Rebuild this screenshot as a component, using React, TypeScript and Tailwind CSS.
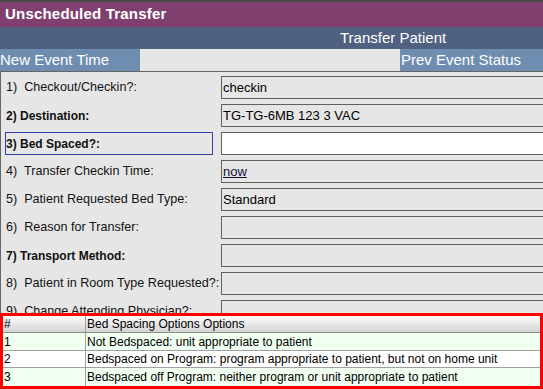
import React from "react";

type Row = {
  n: string;
  label: string;
  bold?: boolean;
  focus?: boolean;
  white?: boolean;
  value?: string;
  link?: string;
};

const rows: Row[] = [
  { n: "1)", label: "Checkout/Checkin?:", value: "checkin" },
  { n: "2)", label: "Destination:", bold: true, value: "TG-TG-6MB 123 3 VAC" },
  { n: "3)", label: "Bed Spaced?:", bold: true, focus: true, white: true },
  { n: "4)", label: "Transfer Checkin Time:", link: "now" },
  { n: "5)", label: "Patient Requested Bed Type:", value: "Standard" },
  { n: "6)", label: "Reason for Transfer:" },
  { n: "7)", label: "Transport Method:", bold: true },
  { n: "8)", label: "Patient in Room Type Requested?:" },
  { n: "9)", label: "Change Attending Physician?:" },
];

const options = [
  { n: "1", text: "Not Bedspaced: unit appropriate to patient", bg: "bg-[#f0fff0]" },
  { n: "2", text: "Bedspaced on Program: program appropriate to patient, but not on home unit", bg: "bg-white" },
  { n: "3", text: "Bedspaced off Program: neither program or unit appropriate to patient", bg: "bg-[#f0fff0]" },
];

export default function App() {
  return (
    <div
      className="relative w-[543px] h-[389px] overflow-hidden bg-[#e6e6e6]"
      style={{ fontFamily: '"Liberation Sans", Arial, sans-serif' }}
    >
      <div className="h-[2px] bg-[#4a4a4a]" />
      <div className="h-[25px] bg-[#7f4070] flex items-center pl-[5px] text-white font-bold text-[15px] tracking-[0.2px]">
        Unscheduled Transfer
      </div>
      <div className="h-[22px] bg-[#4f6081] flex items-center pl-[340px] text-white text-[15px]">
        Transfer Patient
      </div>
      <div className="h-[22px] flex text-white text-[15px]">
        <div className="w-[140px] shrink-0 bg-[#6e8db1] flex items-center">New Event Time</div>
        <div className="flex-1 bg-[#e6e6e6]" />
        <div className="w-[143px] shrink-0 bg-[#6e8db1] flex items-center pl-[1px]">Prev Event Status</div>
      </div>
      <div className="h-[1px] bg-[#666666]" />
      <div className="border-l border-[#666666] pt-[4px] h-[400px] overflow-hidden">
        {rows.map((r) => (
          <div key={r.n} className="flex items-center h-[23px] mb-[5px]">
            <div
              className={
                "ml-[4px] w-[208px] shrink-0 h-[23px] border flex items-center whitespace-pre text-[#111111] " +
                (r.focus ? "border-[#3040a8] " : "border-transparent ") +
                (r.bold ? "font-bold text-[12px]" : "text-[12.6px]")
              }
            >
              {r.bold ? `${r.n} ${r.label}` : `${r.n}  ${r.label}`}
            </div>
            <div
              className={
                "ml-[8px] w-[340px] shrink-0 h-[23px] border border-[#606060] flex items-center pl-[1px] text-[13px] text-black " +
                (r.white ? "bg-white" : "bg-[#e6e6e6]")
              }
            >
              {r.value}
              {r.link && <span className="underline text-[#10103a]">{r.link}</span>}
            </div>
          </div>
        ))}
      </div>

      <div className="absolute left-0 top-[313px] w-[543px] h-[76px] border-[3px] border-[#ff0000] bg-white text-[12px] text-black">
        <div className="flex h-[17px] border-b border-[#8c8c8c] bg-gradient-to-b from-[#fdfdfd] to-[#d4d4d4]">
          <div className="w-[83px] shrink-0 border-r border-[#a0a0a0] pl-[1px] flex items-center">#</div>
          <div className="flex-1 pl-[1px] flex items-center">Bed Spacing Options Options</div>
        </div>
        {options.map((o, i) => (
          <div
            key={o.n}
            className={
              "flex " +
              o.bg +
              (i === 1 ? " h-[17px] border-b border-[#a0a0a0]" : i === 0 ? " h-[18px] border-b border-[#a0a0a0]" : " h-[18px]")
            }
          >
            <div className="w-[83px] shrink-0 border-r border-[#a0a0a0] pl-[1px] flex items-center">{o.n}</div>
            <div className="flex-1 pl-[1px] flex items-center whitespace-nowrap">{o.text}</div>
          </div>
        ))}
      </div>
    </div>
  );
}
